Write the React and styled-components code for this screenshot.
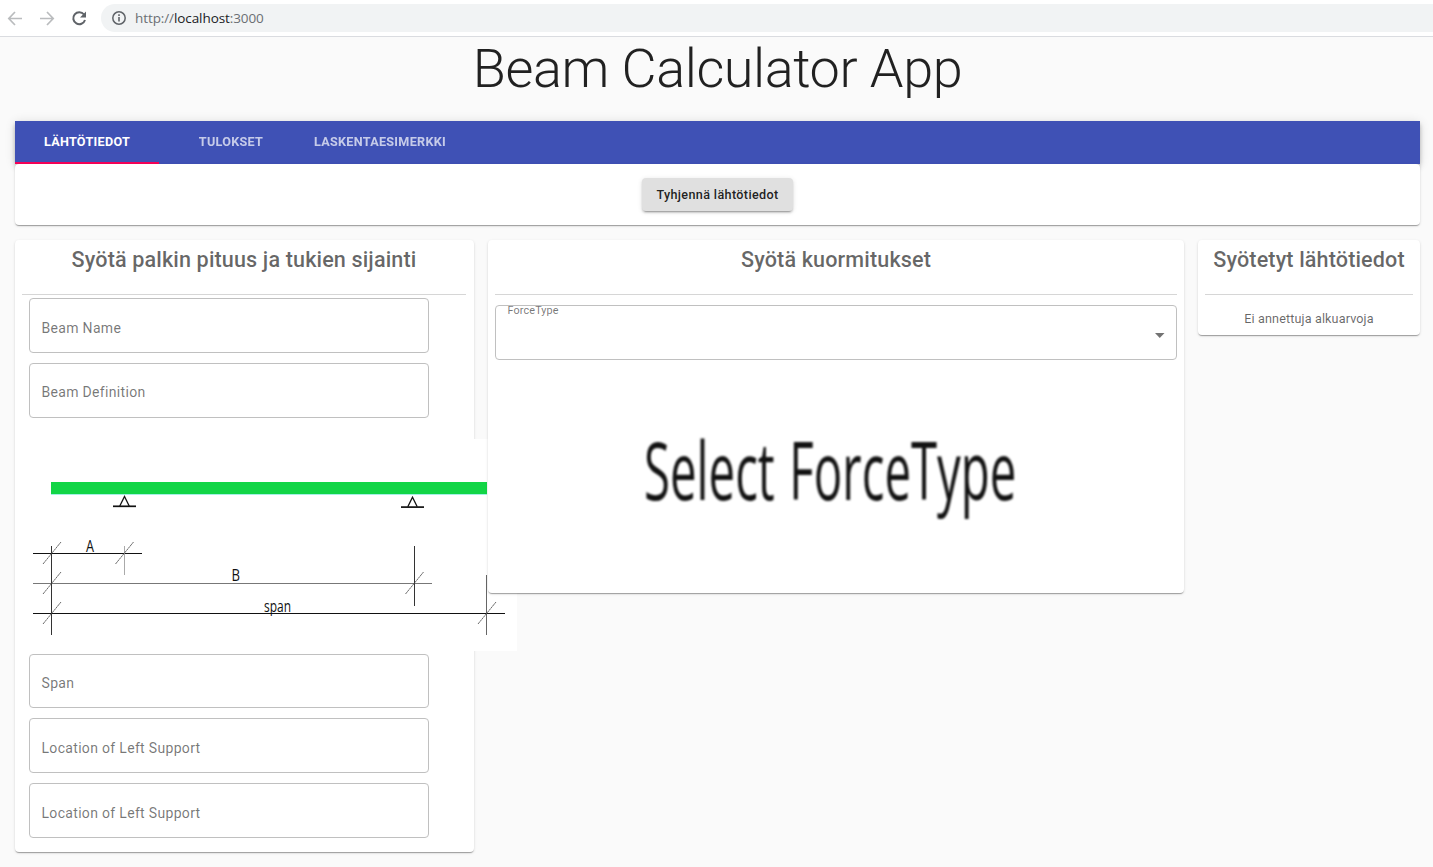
import React from "react";
import styled, { createGlobalStyle } from "styled-components";

const Global = createGlobalStyle`
  * { box-sizing: border-box; }
  body {
    margin: 0;
    height: 867px;
    overflow: hidden;
    background: #fafafa;
    font-family: Roboto, "Liberation Sans", sans-serif;
    color: rgba(0, 0, 0, 0.87);
  }
`;

const BrowserBar = styled.header`
  display: flex;
  align-items: center;
  height: 37px;
  padding-left: 7px;
  background: #fff;
  border-bottom: 1px solid #dadce0;
`;

const NavIcon = styled.svg`
  width: 16px;
  height: 16px;
  margin-right: 16px;
  fill: none;
  stroke: ${(p) => (p.$active ? "#5f6368" : "#babcbe")};
  stroke-width: ${(p) => (p.$active ? 2 : 1.7)};
`;

const AddressBar = styled.div`
  display: flex;
  align-items: center;
  flex: 1;
  height: 28px;
  margin-left: -2px;
  padding-left: 11px;
  border-radius: 14px 0 0 14px;
  background: #f1f3f4;
  font: 13.5px/28px "Open Sans", "Noto Sans", sans-serif;
  letter-spacing: -0.09px;
  color: #6b6f73;
`;

const InfoIcon = styled.svg`
  width: 14px;
  height: 14px;
  margin-right: 9px;
`;

const Host = styled.span`
  color: #202124;
`;

const Title = styled.h1`
  margin: 0;
  height: 84px;
  padding: 0 0 0 2px;
  font-size: 54px;
  font-weight: 300;
  line-height: 63px;
  letter-spacing: -0.45px;
  text-align: center;
`;

const Main = styled.main`
  padding: 0 13px 0 15px;
`;

const Tabs = styled.nav`
  display: flex;
  height: 43px;
  background: #3f51b5;
  color: #fff;
  box-shadow: 0 2px 4px -1px rgba(0, 0, 0, 0.2), 0 4px 5px rgba(0, 0, 0, 0.14),
    0 1px 10px rgba(0, 0, 0, 0.12);
`;

const Tab = styled.button`
  width: ${(p) => p.$width}px;
  padding: 0;
  border: 0;
  border-bottom: 2px solid ${(p) => (p.$active ? "#f50057" : "transparent")};
  background: none;
  color: inherit;
  font: 700 12.6px/38px Roboto, sans-serif;
  letter-spacing: 0.3px;
  text-transform: uppercase;
  span { opacity: ${(p) => (p.$active ? 1 : 0.7)}; }
`;

const Paper = styled.section`
  position: relative;
  background: #fff;
  border-radius: 4px;
  box-shadow: 0 2px 1px -1px rgba(0, 0, 0, 0.2), 0 1px 1px rgba(0, 0, 0, 0.14),
    0 1px 3px rgba(0, 0, 0, 0.12);
`;

const Toolbar = styled(Paper)`
  display: flex;
  justify-content: center;
  height: 61px;
  padding-top: 14px;
`;

const ClearButton = styled.button`
  width: 151px;
  height: 33px;
  padding: 0;
  border: 0;
  border-radius: 4px;
  background: #e0e0e0;
  color: rgba(0, 0, 0, 0.87);
  font: 500 12.6px/33px Roboto, sans-serif;
  letter-spacing: 0.36px;
  box-shadow: 0 3px 1px -2px rgba(0, 0, 0, 0.2), 0 2px 2px rgba(0, 0, 0, 0.14),
    0 1px 5px rgba(0, 0, 0, 0.12);
`;

const Columns = styled.div`
  display: grid;
  grid-template-columns: 459px 696px 222px;
  column-gap: 14px;
  align-items: start;
  margin-top: 15px;
`;

const Card = styled(Paper)`
  height: ${(p) => p.$height}px;
  padding: 0 7px;
`;

const CardTitle = styled.h2`
  display: flow-root;
  height: 55px;
  margin: 0 ${(p) => p.$inset || 0}px 0 0;
  border-bottom: 1px solid #d6d6d6;
  color: rgba(0, 0, 0, 0.6);
  font-size: 21.6px;
  font-weight: 500;
  line-height: 39px;
  letter-spacing: 0.13px;
  text-align: center;
  white-space: nowrap;
`;

const Fields = styled.div`
  display: flex;
  flex-direction: column;
  gap: 10px;
  padding: 3px 7px 0;
`;

const Field = styled.label`
  width: 400px;
  height: ${(p) => p.$height || 55}px;
  padding: 5px 11.5px 0;
  border: 1px solid #c0c0c0;
  border-radius: 4px;
  color: rgba(0, 0, 0, 0.54);
  font-size: 14px;
  line-height: ${(p) => p.$line || 49}px;
  letter-spacing: 0.32px;
`;

const BeamDrawing = styled.svg`
  display: block;
  width: 488px;
  height: 212px;
  margin: 21px 0 0 7px;
  background: #fff;
  overflow: hidden;
`;

const Select = styled.div`
  display: flex;
  justify-content: space-between;
  align-items: flex-start;
  height: 55px;
  margin-top: 10px;
  padding: 0 11px 0 11.5px;
  border: 1px solid #c0c0c0;
  border-radius: 4px;
  color: rgba(0, 0, 0, 0.54);
  font-size: 10.8px;
  line-height: 9px;
  letter-spacing: 0.14px;
`;

const Caret = styled.svg`
  width: 10px;
  height: 5px;
  margin-top: 27px;
  fill: #737373;
`;

const Prompt = styled.svg`
  display: block;
  width: 400px;
  height: 160px;
  margin: 40px 0 0 135px;
  overflow: visible;
  filter: blur(0.8px);
  font-family: "Open Sans", "Noto Sans", sans-serif;
  font-size: 81px;
  word-spacing: 4px;
`;

const Empty = styled.p`
  margin: 0;
  padding-top: 12px;
  color: rgba(0, 0, 0, 0.6);
  font-size: 12.6px;
  line-height: 24px;
  letter-spacing: 0.13px;
  text-align: center;
`;

const Tick = ({ x, y }) => (
  <line x1={x - 9} y1={y + 11} x2={x + 9} y2={y - 11} stroke="#444" strokeWidth="0.8" strokeDasharray="2.5 0.4" />
);

const Support = ({ x, y }) => (
  <g fill="none" stroke="#111">
    <path d={`M${x - 4.7} ${y + 9.5}L${x} ${y}L${x + 4.7} ${y + 9.5}`} strokeWidth="1.3" />
    <path d={`M${x - 11.5} ${y + 9.8}h23`} strokeWidth="1.7" />
  </g>
);

function Beam() {
  return (
    <BeamDrawing viewBox="0 0 488 212">
      <rect x="22" y="43" width="436" height="12" fill="#12d546" />
      <rect x="22" y="55" width="436" height="1" fill="#a5f0e5" />
      <Support x={95.5} y={57.5} />
      <Support x={383.5} y={58.3} />
      <g stroke="#111" strokeWidth="1">
        <path d="M4 114.5h109M4 174.5h472" />
        <path d="M4 144.5h399" stroke="#777" />
        <path d="M22.5 107v89M385.5 107v60" stroke="#333" />
        <path d="M95.5 107v29" stroke="#aaa" />
        <path d="M457.5 136v60" stroke="#666" />
      </g>
      <Tick x={23} y={114} />
      <Tick x={95.5} y={114} />
      <Tick x={23} y={144} />
      <Tick x={385.5} y={144} />
      <Tick x={23} y={174} />
      <Tick x={458} y={174} />
      <g fill="#111" fontFamily="Open Sans, Noto Sans, sans-serif" fontSize="16">
        <text x="57" y="113" textLength="8" lengthAdjust="spacingAndGlyphs">A</text>
        <text x="202.5" y="142" textLength="8.5" lengthAdjust="spacingAndGlyphs">B</text>
        <text x="235" y="173" textLength="27" lengthAdjust="spacingAndGlyphs">span</text>
      </g>
    </BeamDrawing>
  );
}

export default function App() {
  return (
    <>
      <Global />
      <BrowserBar>
        <NavIcon viewBox="0 0 16 16"><path d="M15 8.5H2M8 2L1.8 8.5L8 15" /></NavIcon>
        <NavIcon viewBox="0 0 16 16"><path d="M1 8.5h13M8 2l6.2 6.5L8 15" /></NavIcon>
        <NavIcon viewBox="0 0 16 16" $active>
          <path d="M13 4.5A6 6 0 1 0 14 10" />
          <path d="M15 1.5v6H9z" fill="#5f6368" stroke="none" />
        </NavIcon>
        <AddressBar>
          <InfoIcon viewBox="0 0 14 14">
            <circle cx="7" cy="7" r="6.2" fill="none" stroke="#5f6368" strokeWidth="1.5" />
            <path d="M7 3.3v1.6M7 6v4.6" stroke="#5f6368" strokeWidth="1.6" />
          </InfoIcon>
          <span>http://<Host>localhost</Host>:3000</span>
        </AddressBar>
      </BrowserBar>
      <Title>Beam Calculator App</Title>
      <Main>
        <Tabs>
          <Tab $width={144} $active><span>Lähtötiedot</span></Tab>
          <Tab $width={144}><span>Tulokset</span></Tab>
          <Tab $width={154}><span>Laskentaesimerkki</span></Tab>
        </Tabs>
        <Toolbar>
          <ClearButton>Tyhjennä lähtötiedot</ClearButton>
        </Toolbar>
        <Columns>
          <Card $height={612}>
            <CardTitle $inset={1}>Syötä palkin pituus ja tukien sijainti</CardTitle>
            <Fields>
              <Field>Beam Name</Field>
              <Field $line={47}>Beam Definition</Field>
            </Fields>
            <Beam />
            <Fields>
              <Field $height={54} $line={47}>Span</Field>
              <Field>Location of Left Support</Field>
              <Field>Location of Left Support</Field>
            </Fields>
          </Card>
          <Card $height={353}>
            <CardTitle>Syötä kuormitukset</CardTitle>
            <Select>
              <span>ForceType</span>
              <Caret viewBox="0 0 10 5"><path d="M0 0h9.5L4.75 5z" /></Caret>
            </Select>
            <Prompt viewBox="0 0 400 160">
              <text transform="translate(14 100) scale(0.585 1)" fill="#111">Select ForceType</text>
            </Prompt>
          </Card>
          <Card $height={95}>
            <CardTitle>Syötetyt lähtötiedot</CardTitle>
            <Empty>Ei annettuja alkuarvoja</Empty>
          </Card>
        </Columns>
      </Main>
    </>
  );
}
